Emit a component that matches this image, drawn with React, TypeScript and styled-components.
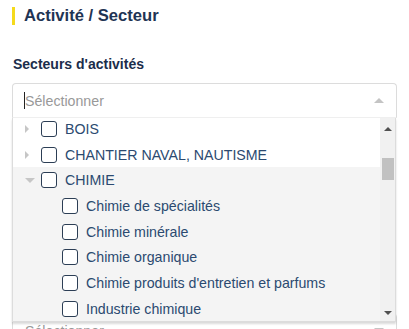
import styled, { createGlobalStyle } from 'styled-components';

const GlobalStyle = createGlobalStyle`
  html, body {
    margin: 0;
    padding: 0;
    background: #fff;
    font-family: "Liberation Sans", Arial, sans-serif;
    overflow: hidden;
  }
`;

const Page = styled.div`
  padding: 7px 12px 0 12px;
  width: 409px;
  height: 329px;
  box-sizing: border-box;
  overflow: hidden;
`;

const SectionTitle = styled.h2`
  margin: 0;
  border-left: 3px solid #f5da1c;
  padding-left: 9px;
  height: 18px;
  line-height: 18px;
  font-size: 16.6px;
  font-weight: bold;
  color: #1f3454;
`;

const Label = styled.div`
  margin: 31px 0 0 1px;
  height: 16px;
  line-height: 16px;
  font-size: 14px;
  font-weight: bold;
  color: #1b2d4b;
`;

const SelectWrap = styled.div<{ $gap: number }>`
  position: relative;
  margin-top: ${p => p.$gap}px;
`;

const Field = styled.div<{ $open?: boolean }>`
  height: 35px;
  box-sizing: border-box;
  border: 1px solid #dcdcdc;
  border-bottom-color: ${p => (p.$open ? '#efefef' : '#dcdcdc')};
  border-radius: ${p => (p.$open ? '4px 4px 0 0' : '4px')};
  padding: 0 12px 0 11px;
  display: flex;
  align-items: center;
`;

const Caret = styled.span`
  width: 1px;
  height: 17px;
  background: #222;
`;

const Placeholder = styled.span`
  flex: 1;
  font-size: 14.2px;
  color: #999;
`;

const Arrow = styled.span<{ $dir: 'up' | 'down' | 'right'; $color: string; $size?: number }>`
  width: 0;
  height: 0;
  display: inline-block;
  ${p => {
    const s = p.$size ?? 4;
    if (p.$dir === 'up')
      return `border-left:${s}px solid transparent;border-right:${s}px solid transparent;border-bottom:${s}px solid ${p.$color};`;
    if (p.$dir === 'down')
      return `border-left:${s}px solid transparent;border-right:${s}px solid transparent;border-top:${s}px solid ${p.$color};`;
    return `border-top:${s}px solid transparent;border-bottom:${s}px solid transparent;border-left:${s}px solid ${p.$color};`;
  }}
`;

const Dropdown = styled.div`
  position: absolute;
  top: 100%;
  left: 0;
  right: 1px;
  height: 203px;
  display: flex;
  background: #fff;
  border: 1px solid #dcdcdc;
  border-top: none;
  box-shadow: 0 2px 2px rgba(0, 0, 0, 0.15);
  z-index: 2;
`;

const List = styled.ul`
  flex: 1;
  margin: 0;
  padding: 0;
  list-style: none;
  overflow: hidden;
`;

const Inner = styled.div`
  margin-top: -2px;
`;

const Row = styled.li<{ $level: number; $shaded?: boolean }>`
  height: 25.7px;
  display: flex;
  align-items: center;
  padding-left: ${p => (p.$level === 0 ? 12 : 49)}px;
  background: ${p => (p.$shaded ? '#f4f4f4' : '#fff')};
  font-size: 14.2px;
  color: #2b4a70;
  white-space: nowrap;
`;

const Toggle = styled.span`
  width: 16px;
  display: flex;
  align-items: center;
`;

const Checkbox = styled.span`
  width: 16px;
  height: 16px;
  box-sizing: border-box;
  border: 1.5px solid #2c3e55;
  border-radius: 3px;
  background: #fff;
  margin-right: 8px;
  flex-shrink: 0;
`;

const Scrollbar = styled.div`
  width: 15px;
  background: #f1f1f1;
  display: flex;
  flex-direction: column;
  align-items: center;
`;

const Thumb = styled.div`
  width: 12px;
  height: 22px;
  margin-top: 27px;
  background: #c1c1c1;
`;

const Spacer = styled.div`
  flex: 1;
`;

interface Item {
  label: string;
  level: number;
  toggle?: 'right' | 'down';
  shaded?: boolean;
}

const items: Item[] = [
  { label: 'BOIS', level: 0, toggle: 'right' },
  { label: 'CHANTIER NAVAL, NAUTISME', level: 0, toggle: 'right' },
  { label: 'CHIMIE', level: 0, toggle: 'down', shaded: true },
  { label: 'Chimie de spécialités', level: 1, shaded: true },
  { label: 'Chimie minérale', level: 1, shaded: true },
  { label: 'Chimie organique', level: 1, shaded: true },
  { label: "Chimie produits d'entretien et parfums", level: 1, shaded: true },
  { label: 'Industrie chimique', level: 1, shaded: true },
];

export default function App() {
  return (
    <Page>
      <GlobalStyle />
      <SectionTitle>Activité / Secteur</SectionTitle>
      <Label>Secteurs d'activités</Label>
      <SelectWrap $gap={11}>
        <Field $open>
          <Caret />
          <Placeholder>Sélectionner</Placeholder>
          <Arrow $dir="up" $color="#c4c4c4" $size={5} />
        </Field>
        <Dropdown>
          <List>
            <Inner>
              {items.map(item => (
                <Row key={item.label} $level={item.level} $shaded={item.shaded}>
                  {item.level === 0 && (
                    <Toggle>
                      <Arrow
                        $dir={item.toggle === 'down' ? 'down' : 'right'}
                        $color="#c6c6c6"
                        $size={item.toggle === 'down' ? 5 : 4}
                      />
                    </Toggle>
                  )}
                  <Checkbox />
                  {item.label}
                </Row>
              ))}
            </Inner>
          </List>
          <Scrollbar>
            <Arrow $dir="up" $color="#505050" $size={4} style={{ marginTop: 9 }} />
            <Thumb />
            <Spacer />
            <Arrow $dir="down" $color="#505050" $size={4} style={{ marginBottom: 6 }} />
          </Scrollbar>
        </Dropdown>
      </SelectWrap>
      <SelectWrap $gap={195}>
        <Field>
          <Placeholder style={{ marginLeft: 1 }}>Sélectionner</Placeholder>
          <Arrow $dir="down" $color="#c4c4c4" $size={5} />
        </Field>
      </SelectWrap>
    </Page>
  );
}
